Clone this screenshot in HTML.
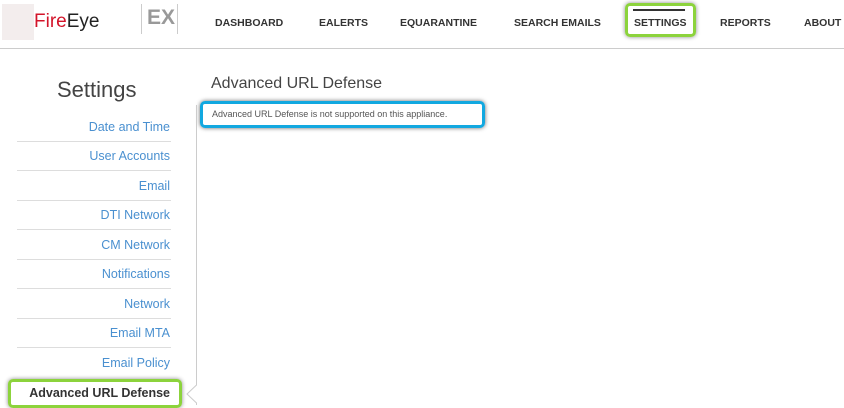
<!DOCTYPE html>
<html><head><style>
*{margin:0;padding:0;box-sizing:border-box}
body{width:844px;height:408px;background:#fff;font-family:"Liberation Sans",sans-serif;position:relative;overflow:hidden}
.a{position:absolute;white-space:nowrap}
.nav{font-size:10.5px;font-weight:bold;color:#333;top:17px}
.it{position:absolute;right:674px;font-size:12.5px;color:#4a90d0;text-align:right}
.ln{position:absolute;left:17px;width:154px;height:1px;background:#ddd}
</style></head><body>
<div class="a" style="left:2px;top:4px;width:32px;height:36px;background:#f3eded"></div>
<div class="a" style="left:34px;top:11px;font-size:19px;color:#222"><span style="color:#d3142a">Fire</span>Eye</div>
<div class="a" style="left:141px;top:4px;width:1px;height:30px;background:#ccc"></div>
<div class="a" style="left:177px;top:4px;width:1px;height:30px;background:#ccc"></div>
<div class="a" style="left:147px;top:6px;font-size:21px;font-weight:bold;color:#999">EX</div>
<div class="a nav" style="left:215px">DASHBOARD</div>
<div class="a nav" style="left:319px">EALERTS</div>
<div class="a nav" style="left:400px">EQUARANTINE</div>
<div class="a nav" style="left:514px">SEARCH EMAILS</div>
<div class="a" style="left:625px;top:3px;width:71px;height:34px;border:3px solid #8cd33c;border-radius:5px;box-shadow:0 0 4px #888"></div>
<div class="a" style="left:633px;top:9px;width:52px;height:2px;background:#333"></div>
<div class="a nav" style="left:634px">SETTINGS</div>
<div class="a nav" style="left:720px">REPORTS</div>
<div class="a nav" style="left:804px">ABOUT</div>
<div class="a" style="left:0;top:48px;width:844px;height:1px;background:#ccc"></div>
<div class="a" style="left:57px;top:77px;font-size:22px;color:#444">Settings</div>
<div class="a" style="left:211px;top:75px;font-size:16px;color:#444">Advanced URL Defense</div>
<div class="a" style="left:200px;top:101px;width:285px;height:27px;border:3px solid #12a8e0;border-radius:5px;box-shadow:0 0 4px #666"></div>
<div class="a" style="left:212px;top:109px;font-size:9px;color:#555">Advanced URL Defense is not supported on this appliance.</div>
<div class="a" style="left:196px;top:105px;width:1px;height:280px;background:#ccc"></div>
<svg class="a" style="left:186px;top:383px" width="12" height="22"><path d="M10.5 0 L10.5 2 L1 11 L10.5 20 L10.5 22" fill="#fff" stroke="#ccc"/></svg>
<div class="it" style="top:120px">Date and Time</div><div class="ln" style="top:141px"></div>
<div class="it" style="top:149px">User Accounts</div><div class="ln" style="top:170px"></div>
<div class="it" style="top:179px">Email</div><div class="ln" style="top:200px"></div>
<div class="it" style="top:208px">DTI Network</div><div class="ln" style="top:229px"></div>
<div class="it" style="top:238px">CM Network</div><div class="ln" style="top:259px"></div>
<div class="it" style="top:267px">Notifications</div><div class="ln" style="top:288px"></div>
<div class="it" style="top:297px">Network</div><div class="ln" style="top:318px"></div>
<div class="it" style="top:326px">Email MTA</div><div class="ln" style="top:347px"></div>
<div class="it" style="top:356px">Email Policy</div>
<div class="a" style="left:8px;top:379px;width:174px;height:29px;border:3px solid #8cd33c;border-radius:5px;box-shadow:0 0 4px #888"></div>
<div class="it" style="top:386px;color:#333;font-weight:bold">Advanced URL Defense</div>
</body></html>
